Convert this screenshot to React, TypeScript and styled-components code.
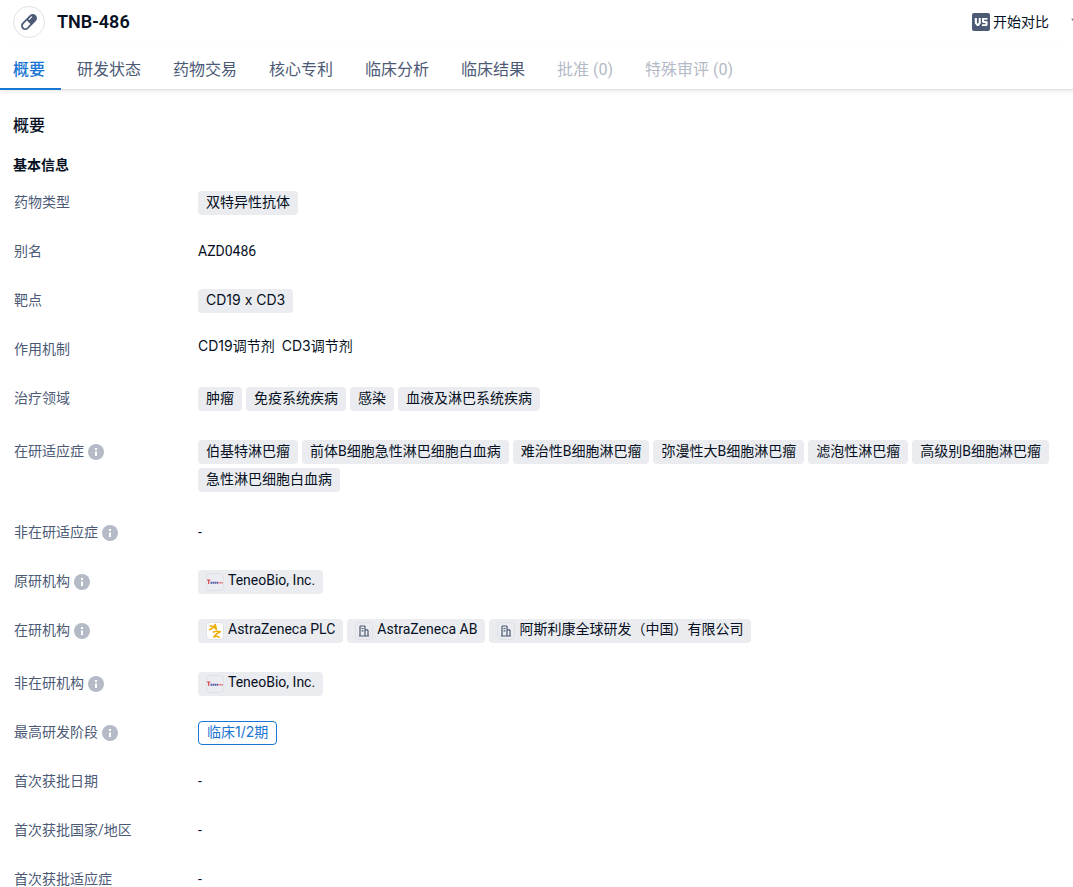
import React from "react";
import styled, { createGlobalStyle } from "styled-components";

const cjk = '"Noto Sans CJK SC", sans-serif';

const GlobalStyle = createGlobalStyle`
  * { box-sizing: border-box; }
  html { scrollbar-width: none; }
  body {
    margin: 0;
    background: #fff;
    color: #061023;
    font-family: Roboto, ${cjk};
    font-size: 14px;
    line-height: 22px;
  }
  h1, h2, h3, dl, dd, dt { margin: 0; padding: 0; }
  button { font: inherit; background: none; border: 0; padding: 0; cursor: pointer; }
  a { color: inherit; text-decoration: none; }
`;

const TopBar = styled.header`
  display: flex;
  align-items: center;
  height: 44px;
  padding-left: 13px;
  gap: 12px;
  overflow: hidden;
`;

const DrugBadge = styled.span`
  display: flex;
  align-items: center;
  justify-content: center;
  width: 32px;
  height: 32px;
  border: 1px solid #dfe1e8;
  border-radius: 50%;
`;

const DrugName = styled.h1`
  flex: 1;
  font-size: 18px;
  line-height: 24px;
  font-weight: 600;
`;

const Actions = styled.div`
  display: flex;
  align-items: center;
  gap: 22px;
  margin-right: -15px;
  padding-bottom: 1px;
`;

const ActionButton = styled.button`
  display: flex;
  align-items: center;
  gap: 3px;
  line-height: 20px;
  color: #061023;
`;

const Tabs = styled.nav`
  display: flex;
  height: 46px;
  border-bottom: 1px solid #dfe1e5;
  box-shadow: 0 2px 4px rgba(0, 0, 0, 0.08);
  padding-left: 13px;
  gap: 32px;
`;

const Tab = styled.a<{ $active?: boolean; $disabled?: boolean }>`
  height: 46px;
  font-size: 16px;
  line-height: 52px;
  white-space: nowrap;
  font-weight: ${(p) => (p.$active ? 500 : 400)};
  color: ${(p) => (p.$active ? "#1976d2" : p.$disabled ? "#b4bac6" : "#4c5a76")};
  ${(p) =>
    p.$active &&
    `border-bottom: 2px solid #1976d2;
     margin: 0 -16px 0 -13px;
     padding: 0 16px 0 13px;`}
`;

const Content = styled.main`
  padding: 24px 13px 0;
`;

const SectionTitle = styled.h2`
  font-size: 16px;
  line-height: 24px;
  font-weight: 500;
`;

const GroupTitle = styled.h3`
  margin: 16px 0 15px;
  font-size: 14px;
  line-height: 22px;
  font-weight: 700;
`;

const Row = styled.div`
  display: grid;
  grid-template-columns: 184px 1fr;
  margin-bottom: 25px;
  padding-left: 1px;
`;

const Label = styled.dt`
  display: flex;
  align-items: center;
  gap: 4px;
  height: 24px;
  color: #4c5a76;
`;

const LabelText = styled.span`
  line-height: 22px;
  padding-bottom: 2px;
`;

const Value = styled.dd<{ $list?: boolean }>`
  display: flex;
  flex-wrap: wrap;
  align-content: flex-start;
  gap: 4px;
  min-height: 24px;
  padding-bottom: ${(p) => (p.$list ? 4 : 0)}px;
`;

const Plain = styled.span`
  line-height: 22px;
`;

const Mechanism = styled.a`
  margin-right: 3px;
  line-height: 16px;
  font-family: Inter, ${cjk};
`;

const Tag = styled.a`
  display: inline-flex;
  gap: 4px;
  height: 24px;
  padding: 0 8px;
  border-radius: 4px;
  background: #ebecf0;
  line-height: 22px;
  white-space: nowrap;
`;

const TargetTag = styled(Tag)`
  font-family: Inter, ${cjk};
`;

const OrgTag = styled(Tag)`
  line-height: 20px;
`;

const PhaseTag = styled.a`
  height: 24px;
  padding: 0 8px;
  border: 1px solid #1976d2;
  border-radius: 4px;
  color: #1976d2;
  line-height: 20px;
  font-family: Inter, ${cjk};
`;

const Logo = styled.span<{ $fill?: string }>`
  display: flex;
  align-items: center;
  justify-content: center;
  width: 18px;
  height: 18px;
  margin-top: 3px;
  border: 1px solid #dfe1e8;
  border-radius: 4px;
  background: ${(p) => p.$fill ?? "transparent"};
`;

const PillIcon = () => (
  <svg width="20" height="20" viewBox="0 0 20 20" aria-hidden="true">
    <g transform="rotate(45 10 10)">
      <rect x="5.800" y="0.500" width="8.400" height="19" rx="4.200" fill="#4c5a76" />
      <path d="M7.500 10.500h5V15.200a2.500 2.500 0 0 1-5 0z" fill="#fff" />
      <path d="M8.200 4.500v3.500" stroke="#fff" strokeWidth="1.200" strokeLinecap="round" />
    </g>
  </svg>
);

const VsIcon = () => (
  <svg width="18" height="18" viewBox="0 0 18 18" aria-hidden="true">
    <rect width="18" height="18" rx="2" fill="#4c5a76" />
    <path d="M2.800 5h2.100v4.600l.9 1.300.9-1.300V5h2.100v5.200L6.700 13H5L2.800 10.200zM10 5h5.500v1.800h-3.500v1.300h2.600l1 1V12l-1 1H9.900v-1.800h3.600V9.900H11l-1-1z" fill="#fff" />
  </svg>
);

const StarIcon = () => (
  <svg width="17" height="17" viewBox="0 0 17 17" fill="none" stroke="#4c5a76" strokeLinejoin="round" aria-hidden="true">
    <path d="M8.500 1l2.300 4.500 5 .8-3.600 3.500.9 5-4.600-2.400-4.600 2.400.9-5L.8 6.300l5.400-.8z" />
  </svg>
);

const InfoIcon = () => (
  <svg width="16" height="16" viewBox="0 0 16 16" aria-hidden="true">
    <circle cx="8" cy="8" r="8" fill="#b4bac6" />
    <path d="M7 4h2v2H7zM7 7.500h2V12H7z" fill="#fff" />
  </svg>
);

const BuildingIcon = () => (
  <svg width="10" height="12" viewBox="0 0 10 12" fill="none" stroke="#4c5a76" strokeWidth="1.200" aria-hidden="true">
    <path d="M1 11V1.600L1.600 1H5.400L6 1.600V11M6 4.800H8.400L9 5.400V11M0 11h10" />
    <path d="M2.500 3.500h2M2.500 5.800h2" />
  </svg>
);

const AstraIcon = () => (
  <svg width="14" height="16" viewBox="0 0 14 16" fill="none" stroke="#f0ab00" strokeWidth="1.500" strokeLinecap="round" strokeLinejoin="round" aria-hidden="true">
    <path d="M1.500 6.800C4 6 6 4.300 7.300 1.500L8.300 6.300M2.300 3.200C4.800 2.600 6.800 4.500 8.300 6.300" />
    <path d="M5.300 9C7.500 8 9.800 7.800 12.300 8.800 9.500 9.800 7.200 11.600 5.800 14 7.800 13 9.600 13.200 11.200 14.300" />
  </svg>
);

const TeneoIcon = () => (
  <svg width="16" height="6" viewBox="0 0 16 6" aria-hidden="true">
    <path d="M0 1h3.400M1.700 1v4" stroke="#d8474e" strokeWidth="1.200" />
    <path d="M3.500 3.700h7.500" stroke="#5a5fa8" strokeWidth="2" strokeDasharray="1.600 .4" />
    <path d="M11.300 3.700h4.700" stroke="#e3737a" strokeWidth="1.600" strokeDasharray="1.300 .3" />
  </svg>
);

const tabs = [
  { text: "概要", active: true },
  { text: "研发状态" },
  { text: "药物交易" },
  { text: "核心专利" },
  { text: "临床分析" },
  { text: "临床结果" },
  { text: "批准 (0)", disabled: true },
  { text: "特殊审评 (0)", disabled: true },
];

type FieldProps = { label: string; info?: boolean; list?: boolean; children?: React.ReactNode };

const Field = ({ label, info, list, children }: FieldProps) => (
  <Row>
    <Label>
      <LabelText>{label}</LabelText>
      {info && <InfoIcon />}
    </Label>
    <Value $list={list}>{children ?? <Plain>-</Plain>}</Value>
  </Row>
);

const Tags = ({ items }: { items: string[] }) => (
  <>
    {items.map((t) => (
      <Tag href="#" key={t}>{t}</Tag>
    ))}
  </>
);

const Teneo = () => (
  <OrgTag href="#"><Logo><TeneoIcon /></Logo>TeneoBio, Inc.</OrgTag>
);

export default function App() {
  return (
    <>
      <GlobalStyle />
      <TopBar>
        <DrugBadge><PillIcon /></DrugBadge>
        <DrugName>TNB-486</DrugName>
        <Actions>
          <ActionButton><VsIcon />开始对比</ActionButton>
          <ActionButton aria-label="收藏"><StarIcon /></ActionButton>
        </Actions>
      </TopBar>
      <Tabs>
        {tabs.map((t) => (
          <Tab href="#" key={t.text} $active={t.active} $disabled={t.disabled}>{t.text}</Tab>
        ))}
      </Tabs>
      <Content>
        <SectionTitle>概要</SectionTitle>
        <GroupTitle>基本信息</GroupTitle>
        <dl>
          <Field label="药物类型"><Tags items={["双特异性抗体"]} /></Field>
          <Field label="别名"><Plain>AZD0486</Plain></Field>
          <Field label="靶点"><TargetTag href="#">CD19 x CD3</TargetTag></Field>
          <Field label="作用机制">
            <Mechanism href="#">CD19调节剂</Mechanism>
            <Mechanism href="#">CD3调节剂</Mechanism>
          </Field>
          <Field label="治疗领域" list>
            <Tags items={["肿瘤", "免疫系统疾病", "感染", "血液及淋巴系统疾病"]} />
          </Field>
          <Field label="在研适应症" info list>
            <Tags items={["伯基特淋巴瘤", "前体B细胞急性淋巴细胞白血病", "难治性B细胞淋巴瘤", "弥漫性大B细胞淋巴瘤", "滤泡性淋巴瘤", "高级别B细胞淋巴瘤", "急性淋巴细胞白血病"]} />
          </Field>
          <Field label="非在研适应症" info />
          <Field label="原研机构" info><Teneo /></Field>
          <Field label="在研机构" info list>
            <OrgTag href="#"><Logo $fill="#fff"><AstraIcon /></Logo>AstraZeneca PLC</OrgTag>
            <OrgTag href="#"><Logo><BuildingIcon /></Logo>AstraZeneca AB</OrgTag>
            <OrgTag href="#"><Logo><BuildingIcon /></Logo>阿斯利康全球研发（中国）有限公司</OrgTag>
          </Field>
          <Field label="非在研机构" info><Teneo /></Field>
          <Field label="最高研发阶段" info><PhaseTag href="#">临床1/2期</PhaseTag></Field>
          <Field label="首次获批日期" />
          <Field label="首次获批国家/地区" />
          <Field label="首次获批适应症" />
        </dl>
      </Content>
    </>
  );
}
